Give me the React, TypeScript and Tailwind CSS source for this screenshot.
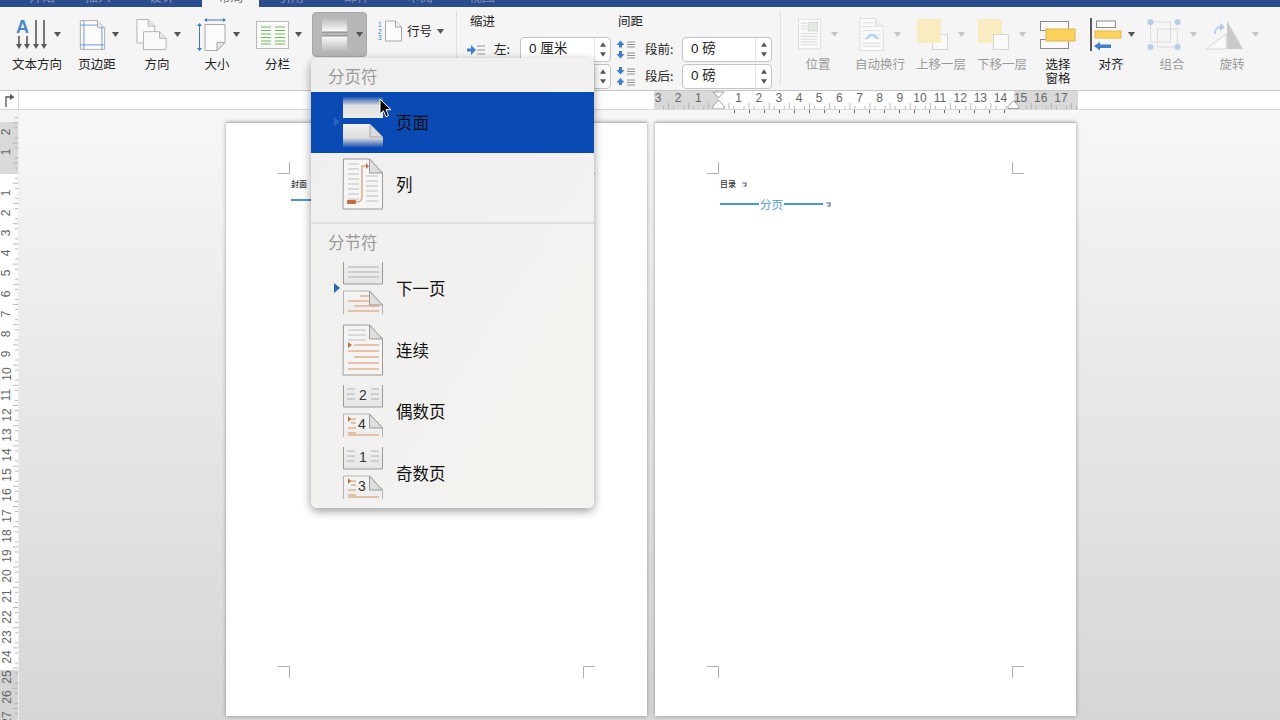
import React from "react";

const FONT = "font-['Noto_Sans_CJK_SC','Noto_Sans',sans-serif]";

function Caret({ cls = "fill-[#555]" }: { cls?: string }) {
  return (
    <svg width="7" height="5" viewBox="0 0 7 5" className={cls}>
      <path d="M0 0h7L3.500 5z" />
    </svg>
  );
}

function TextDirIcon() {
  return (
    <svg width="32" height="32" viewBox="0 0 32 32">
      <text x="0" y="14" fontSize="18" fontWeight="700" fill="#4a86d4" fontFamily="Liberation Sans, sans-serif">A</text>
      <g stroke="#5a5a5a" strokeWidth="1.6" fill="#5a5a5a">
        <path d="M3 17v10M11 17v10M20 1v26M28 1v26" fill="none" />
        <path d="M0 25l3 5 3-5zM8 25l3 5 3-5zM17 25l3 5 3-5zM25 25l3 5 3-5z" stroke="none" />
      </g>
    </svg>
  );
}

function MarginIcon() {
  return (
    <svg width="27" height="34" viewBox="0 0 30 35">
      <path d="M1.500 1.500h19l8 8v24h-27z" fill="#fbfbfb" stroke="#a8a8a8" />
      <path d="M20.500 1.500v8h8" fill="#e6e6e6" stroke="#a8a8a8" />
      <path d="M5.500 1.500v32M25.500 8v25.500M1.500 6.500h19M1.500 28.500h27" stroke="#5b93d3" fill="none" />
    </svg>
  );
}

function OrientIcon() {
  return (
    <svg width="32" height="33" viewBox="0 0 34 34">
      <path d="M1 1h12l7 7v18H1z" fill="#fafafa" stroke="#b0b0b0" />
      <path d="M13 1v7h7" fill="#e8e8e8" stroke="#b0b0b0" />
      <path d="M8 14h17l7 7v12H8z" fill="#fafafa" stroke="#b0b0b0" />
      <path d="M25 14v7h7" fill="#e8e8e8" stroke="#b0b0b0" />
    </svg>
  );
}

function SizeIcon() {
  return (
    <svg width="30" height="33" viewBox="0 0 30 33">
      <path d="M8 6.500h20v18l-8 8H8z" fill="#fbfbfb" stroke="#a8a8a8" />
      <path d="M28 24.500h-8v8z" fill="#e6e6e6" stroke="#a8a8a8" />
      <path d="M8 2h20M2.500 7v24" stroke="#3f78bc" fill="none" />
      <path d="M7 2l3-2v4zM29 2l-3-2v4zM2.500 5l-2.500 3h5zM2.500 33l-2.500-3h5z" fill="#3f78bc" />
    </svg>
  );
}

function ColumnsIcon() {
  return (
    <svg width="33" height="28" viewBox="0 0 33 28">
      <rect x=".5" y=".5" width="32" height="27" fill="#fbfbfb" stroke="#b9b9b9" />
      <path d="M5 6h10M5 9.500h10M5 13h10M5 16.500h10M5 20h10M5 23h10M19 6h10M19 9.500h10M19 13h10M19 16.500h10M19 20h10M19 23h10" stroke="#6cba55" strokeWidth="1.200" />
    </svg>
  );
}

function BreakIcon() {
  return (
    <svg width="26" height="33" viewBox="0 0 26 33">
      <defs>
        <linearGradient id="bt" x1="0" y1="0" x2="0" y2="1">
          <stop offset="0" stopColor="#b9b9b9" />
          <stop offset="1" stopColor="#fdfdfd" />
        </linearGradient>
        <linearGradient id="bb" x1="0" y1="0" x2="0" y2="1">
          <stop offset="0" stopColor="#fdfdfd" />
          <stop offset="1" stopColor="#b9b9b9" />
        </linearGradient>
      </defs>
      <rect x="0" y="0" width="25" height="14" fill="url(#bt)" />
      <rect x="0" y="18" width="25" height="15" fill="url(#bb)" />
      <path d="M0 14h25M0 18h25" stroke="#707070" strokeWidth=".8" />
    </svg>
  );
}

function LineNoIcon() {
  return (
    <svg width="24" height="22" viewBox="0 0 24 22">
      <text x="0" y="7" fontSize="6.500" fill="#3a78bf" fontFamily="Liberation Sans, sans-serif">1</text>
      <text x="0" y="13.500" fontSize="6.500" fill="#3a78bf" fontFamily="Liberation Sans, sans-serif">2</text>
      <text x="0" y="20" fontSize="6.500" fill="#3a78bf" fontFamily="Liberation Sans, sans-serif">3</text>
      <path d="M7.500 1h10l6 6v14h-16z" fill="#fcfcfc" stroke="#a8a8a8" />
      <path d="M17.500 1v6h6" fill="#ededed" stroke="#a8a8a8" />
    </svg>
  );
}

function PositionIcon() {
  return (
    <svg width="24" height="33" viewBox="0 0 26 34">
      <rect x=".5" y=".5" width="24" height="32" fill="#fbfbfb" stroke="#dcdcdc" />
      <rect x="11" y="4" width="10" height="9" fill="#e5ebe0" stroke="#cfcfcf" />
      <path d="M3 5h6M3 8h6M3 11h6M3 16h18M3 19h18M3 22h18M3 25h18M3 28h18" stroke="#d6d6d6" />
    </svg>
  );
}

function WrapIcon() {
  return (
    <svg width="26" height="33" viewBox="0 0 26 34">
      <path d="M.5.500h16l8 8v25h-24z" fill="#fbfbfb" stroke="#dcdcdc" />
      <path d="M16.500.500v8h8" fill="#eeeeee" stroke="#dcdcdc" />
      <path d="M3 5h11M3 9h11M3 13h19M3 17h3M19 17h3M3 21h3M19 21h3M3 26h19M3 29h19" stroke="#dcdcdc" />
      <path d="M6 22c2-8 12-8 14 0l-3 0c-2-4-6-4-8 0z" fill="#bcd4ee" />
    </svg>
  );
}

function LayerIcon({ back }: { back?: boolean }) {
  return (
    <svg width="32" height="31" viewBox="0 0 32 31">
      {back ? (
        <>
          <rect x="0" y="0" width="24" height="24" fill="#f8ecc0" />
          <rect x="15.500" y="15.500" width="15" height="15" fill="#fafafa" stroke="#d6d6d6" />
        </>
      ) : (
        <>
          <rect x="15.500" y="15.500" width="15" height="15" fill="#fafafa" stroke="#d6d6d6" />
          <rect x="0" y="0" width="24" height="24" fill="#f8ecc0" />
        </>
      )}
    </svg>
  );
}

function PaneIcon() {
  return (
    <svg width="36" height="28" viewBox="0 0 36 28">
      <rect x=".5" y=".5" width="28" height="9" fill="#fbfbfb" stroke="#8c8c8c" />
      <rect x=".5" y="18.500" width="28" height="9" fill="#fbfbfb" stroke="#8c8c8c" />
      <rect x="6" y="8" width="29" height="12" fill="#fbd25c" stroke="#dcb445" />
    </svg>
  );
}

function AlignIcon() {
  return (
    <svg width="32" height="33" viewBox="0 0 32 33">
      <rect x="0" y="0" width="2" height="33" fill="#5a5a5a" />
      <rect x="6.500" y="3" width="19" height="6.500" fill="#fbfbfb" stroke="#8c8c8c" />
      <rect x="5" y="13" width="26" height="7" fill="#fbd25c" stroke="#e3bb4a" />
      <path d="M4 28l6-4v2.500h11v3.500H10v2.500z" fill="#3f7fcf" />
    </svg>
  );
}

function GroupIcon() {
  return (
    <svg width="34" height="33" viewBox="0 0 34 33">
      <rect x="3.500" y="4" width="20" height="20" fill="none" stroke="#dcdcdc" />
      <rect x="10.500" y="11" width="20" height="18" fill="none" stroke="#dcdcdc" />
      <circle cx="3.500" cy="4" r="3" fill="#b4cce8" />
      <circle cx="30.500" cy="4" r="3" fill="#b4cce8" />
      <circle cx="3.500" cy="29" r="3" fill="#b4cce8" />
      <circle cx="30.500" cy="29" r="3" fill="#b4cce8" />
    </svg>
  );
}

function RotateIcon() {
  return (
    <svg width="38" height="30" viewBox="0 0 38 30">
      <path d="M22 1l16 28H22z" fill="#c9c9c9" />
      <path d="M1 29l20-15v15z" fill="#fafafa" stroke="#d6d6d6" />
      <path d="M10 14c0-5 2-7 6-7" fill="none" stroke="#b4cce8" strokeWidth="1.600" />
      <path d="M15 3l5 4-5 4z" fill="#b4cce8" />
    </svg>
  );
}

function Tool({ icon, label, w = "w-[60px]", caret = true, dim = false, wide = false }: {
  icon: React.ReactNode; label: string; w?: string; caret?: boolean; dim?: boolean; wide?: boolean;
}) {
  return (
    <div className={`${w} h-[83px] shrink-0 flex flex-col items-center pt-[10px]`}>
      <div className={`h-[35px] flex items-center ${wide ? "gap-[9px]" : "gap-[6px] pl-[3px]"}`}>
        {icon}
        {caret && <Caret cls={dim ? "fill-[#c4c4c4]" : "fill-[#555]"} />}
      </div>
      <div className={`mt-[5px] text-[12.5px] leading-[14px] text-center whitespace-pre-line ${dim ? "text-[#9b9b9b]" : "text-[#222]"}`}>
        {label}
      </div>
    </div>
  );
}

function Spin() {
  return (
    <div className="w-[16px] h-full border-l border-[#e6e6e6] flex flex-col items-center justify-center gap-[5px]">
      <svg width="6" height="5" viewBox="0 0 7 5" className="fill-[#555]"><path d="M3.500 0L7 5H0z" /></svg>
      <svg width="6" height="5" viewBox="0 0 7 5" className="fill-[#555]"><path d="M0 0h7L3.500 5z" /></svg>
    </div>
  );
}

function Field({ value, w }: { value: string; w: string }) {
  return (
    <div className={`${w} h-[25px] bg-white border border-[#c4c4c4] rounded-[4px] flex items-center justify-between pl-[8px] text-[13.5px] text-[#222] shrink-0 font-['Liberation_Sans','Noto_Sans_CJK_SC',sans-serif]`}>
      <span>{value}</span>
      <Spin />
    </div>
  );
}

function SpaceIcon({ up }: { up?: boolean }) {
  return (
    <svg width="21" height="21" viewBox="0 0 21 21">
      <g fill="#3f7fcf">
        {up ? (
          <>
            <path d="M4 1h3v3h2.500L5.500 8.500 1.500 4H4z" />
            <path d="M5.500 12l4 4.500H7V19H4v-2.500H1.500z" />
          </>
        ) : (
          <>
            <path d="M5.500 1.500l4 4.500H7v2.500H4V6H1.500z" />
            <path d="M4 12h3v3h2.500L5.500 19.500 1.500 15H4z" />
          </>
        )}
      </g>
      <path d="M12 3h8M12 5.500h8M12 8h8M12 14h8M12 16.500h8M12 19h8" stroke="#888" strokeWidth=".9" />
    </svg>
  );
}

function HRuler() {
  const nums = ["3", "2", "1", "", "1", "2", "3", "4", "5", "6", "7", "8", "9", "10", "11", "12", "13", "14", "15", "16", "17"];
  return (
    <div className="relative w-[424px] h-full shrink-0 bg-white overflow-hidden">
      <div className="flex h-full">
        <div className="w-[64px] bg-[#d9d9d9]" />
        <div className="w-[296px]" />
        <div className="flex-1 bg-[#d9d9d9]" />
      </div>
      <svg className="absolute inset-0" width="424" height="18" viewBox="0 0 424 18">
        {Array.from({ length: 85 }).map((_, i) => {
          const x = 0.5 + 3.900 + i * 5.0375;
          const h = i % 4 === 2 ? 6 : i % 4 === 0 ? 0 : 3;
          return h ? <path key={i} d={`M${x} 18v-${h}`} stroke="#a8a8a8" strokeWidth=".8" /> : null;
        })}
      </svg>
      <div className="absolute left-[-6px] top-[-1px] flex">
        {nums.map((n, i) => (
          <span key={i} className="w-[20.15px] text-center text-[12px] leading-[16px] text-[#666] font-['Liberation_Sans',sans-serif]">{n}</span>
        ))}
      </div>
      <svg className="absolute left-[58px] top-0" width="13" height="18" viewBox="0 0 13 18">
        <path d="M1 1l11 0-5.500 6zM1 18h11v-3l-5.500-6-5.500 6z" fill="#fff" stroke="#8a8a8a" strokeWidth=".8" />
      </svg>
      <svg className="absolute left-[353px] top-[9px]" width="13" height="9" viewBox="0 0 13 9">
        <path d="M1 8.500h11v-2l-5.500-6-5.500 6z" fill="#fff" stroke="#8a8a8a" strokeWidth=".8" />
      </svg>
    </div>
  );
}

function VRuler() {
  const nums = ["2", "1", "", ...Array.from({ length: 27 }, (_, i) => String(i + 1))];
  return (
    <div className="relative w-[18px] h-full shrink-0 overflow-hidden">
      <div className="flex flex-col h-full">
        <div className="h-[12px] bg-[#f4f4f4]" />
        <div className="h-[52px] bg-[#d9d9d9]" />
        <div className="h-[496px] bg-white" />
        <div className="flex-1 bg-[#d4d4d4]" />
      </div>
      <svg className="absolute inset-0" width="18" height="610" viewBox="0 0 18 610">
        {Array.from({ length: 125 }).map((_, i) => {
          const y = 2.600 + i * 5.050;
          const h = i % 4 === 0 ? 0 : i % 4 === 2 ? 5 : 3;
          return h ? <path key={i} d={`M18 ${y}h-${h}`} stroke="#a8a8a8" strokeWidth=".8" /> : null;
        })}
      </svg>
      <div className="absolute left-0 top-[12px] flex flex-col">
        {nums.map((n, i) => (
          <div key={i} className="h-[20.2px] w-[13px] flex items-center justify-center">
            <span className="-rotate-90 text-[12px] leading-[12px] text-[#666] font-['Liberation_Sans',sans-serif]">{n}</span>
          </div>
        ))}
      </div>
    </div>
  );
}

function Crop({ kind }: { kind: "tl" | "tr" | "bl" | "br" }) {
  const d = {
    tl: "M0 11.500h11.500V0",
    tr: "M.5 0v11.500H12",
    bl: "M0 .5h11.500V12",
    br: "M12 .5H.5V12",
  }[kind];
  return (
    <svg width="12" height="12" viewBox="0 0 12 12" className="shrink-0">
      <path d={d} fill="none" stroke="#b0b0b0" />
    </svg>
  );
}

function ParaMark() {
  return (
    <svg width="5" height="5" viewBox="0 0 5 5" className="shrink-0">
      <path d="M.5 1H4v3H1.500" fill="none" stroke="#2d5fb0" strokeWidth="1.100" />
    </svg>
  );
}

function Page({ children }: { children: React.ReactNode }) {
  return (
    <div className="w-[421px] h-[594px] shrink-0 bg-white border-t border-[#bcbcbc] shadow-[0_0_4px_rgba(0,0,0,0.35)] flex flex-col px-[52px] pt-[39px] pb-[38px] relative">
      <div className="flex justify-between">
        <Crop kind="tl" />
        <Crop kind="tr" />
      </div>
      <div className="flex-1 pl-[13px] flex flex-col">{children}</div>
      <div className="flex justify-between">
        <Crop kind="bl" />
        <Crop kind="br" />
      </div>
    </div>
  );
}

function Lines({ d, c = "#bdbdbd" }: { d: string; c?: string }) {
  return <path d={d} stroke={c} fill="none" strokeWidth="1" />;
}

function Defs() {
  return (
    <svg width="0" height="0" className="absolute">
      <defs>
        <linearGradient id="pgTop" x1="0" y1="0" x2="0" y2="1">
          <stop offset="0" stopColor="#2356b4" />
          <stop offset=".4" stopColor="#dedede" />
          <stop offset="1" stopColor="#ececec" />
        </linearGradient>
        <linearGradient id="pgBot" x1="0" y1="0" x2="0" y2="1">
          <stop offset="0" stopColor="#f1f1f1" />
          <stop offset=".6" stopColor="#dedede" />
          <stop offset="1" stopColor="#2356b4" />
        </linearGradient>
        <linearGradient id="fadeTop" x1="0" y1="0" x2="0" y2="1">
          <stop offset="0" stopColor="#f0f0f0" />
          <stop offset="1" stopColor="#e6e6e6" />
        </linearGradient>
        <linearGradient id="fadeBot" x1="0" y1="0" x2="0" y2="1">
          <stop offset="0" stopColor="#f5f5f5" />
          <stop offset=".8" stopColor="#eeeeee" />
          <stop offset="1" stopColor="#f1f1f1" />
        </linearGradient>
      </defs>
    </svg>
  );
}

function IconPage() {
  return (
    <svg width="42" height="52" viewBox="0 0 42 52">
      <rect x="1" y="1" width="40" height="21" fill="url(#pgTop)" />
      <path d="M1 28h27l13 14v9H1z" fill="url(#pgBot)" />
      <path d="M28 28v13h13z" fill="#dcdcdc" stroke="#9a9a9a" strokeWidth=".8" />
    </svg>
  );
}

function IconCol() {
  return (
    <svg width="42" height="52" viewBox="0 0 42 52">
      <path d="M1.500 1h26l13 14v36h-39.500z" fill="#f6f6f6" stroke="#9a9a9a" />
      <path d="M27.500 1v14h13z" fill="#dedede" stroke="#9a9a9a" />
      <Lines d="M6 6h11M6 11h11M6 16h11M6 21h11M6 26h11M6 31h11M6 36h11M24 18h12M24 23h12M24 28h12M24 33h12M24 38h12M24 43h12M6 41h11" />
      <path d="M7 44h8c4 0 5-2 5-6V8h4" fill="none" stroke="#e3a884" strokeWidth="1.500" />
      <path d="M24 5l3 3-3 3z" fill="#c66d3d" />
      <rect x="5" y="42" width="9" height="4" rx="1" fill="#c66d3d" />
    </svg>
  );
}

function IconNext() {
  return (
    <svg width="42" height="52" viewBox="0 0 42 52">
      <path d="M1.500 0v22h39V0" fill="url(#fadeTop)" stroke="#9a9a9a" />
      <Lines d="M6 5h31M6 10h31M6 15h31" c="#b0b0b0" />
      <path d="M1.500 52V29h26l13 14v9" fill="url(#fadeBot)" stroke="#b4b4b4" />
      <path d="M27.500 29v14h13z" fill="#dedede" stroke="#9a9a9a" />
      <Lines d="M18 34h9M6 39h22M12 44h25M6 49h31" c="#d9905f" />
    </svg>
  );
}

function IconCont() {
  return (
    <svg width="42" height="52" viewBox="0 0 42 52">
      <path d="M1.500 1h26l13 14v36h-39.500z" fill="#f4f4f4" stroke="#9a9a9a" />
      <path d="M27.500 1v14h13z" fill="#dedede" stroke="#9a9a9a" />
      <Lines d="M6 6h18M6 11h18" />
      <Lines d="M6 16h18" c="#bdbdbd" />
      <Lines d="M12 21h25M6 27h31M12 33h25M6 39h31M6 45h31" c="#d9905f" />
      <path d="M6 18l4 3-4 3z" fill="#c66d3d" />
    </svg>
  );
}

function IconNum({ a, b }: { a: string; b: string }) {
  return (
    <svg width="42" height="52" viewBox="0 0 42 52">
      <path d="M1.500 0v22h39V0" fill="url(#fadeTop)" stroke="#9a9a9a" />
      <Lines d="M5 4h8M5 9h8M5 14h8M29 4h8M29 9h8M29 14h8" c="#b0b0b0" />
      <text x="21" y="15" textAnchor="middle" fontSize="14" fill="#333" fontFamily="Liberation Sans, sans-serif">{a}</text>
      <path d="M1.500 52V29h26l13 14v9" fill="url(#fadeBot)" stroke="#b4b4b4" />
      <path d="M27.500 29v14h13z" fill="#dedede" stroke="#9a9a9a" />
      <Lines d="M6 34h8M9 38h5M6 43h8M6 48h8M6 50h31" c="#d9905f" />
      <path d="M6 31l3 3-3 3z" fill="#c66d3d" />
      <text x="20" y="44" textAnchor="middle" fontSize="14" fill="#333" fontFamily="Liberation Sans, sans-serif">{b}</text>
    </svg>
  );
}

function MenuRow({ icon, label, mark, active }: { icon: React.ReactNode; label: string; mark?: boolean; active?: boolean }) {
  return (
    <div className={`h-[61.5px] shrink-0 flex items-center pl-[22.500px] ${active ? "bg-[#0a4ab4]" : ""}`}>
      <div className="w-[8px] flex">
        {mark && (
          <svg width="6" height="10" viewBox="0 0 6 10" className={active ? "fill-[#2a62bb]" : "fill-[#2f66b3]"}>
            <path d="M0 0l6 5-6 5z" />
          </svg>
        )}
      </div>
      {icon}
      <span className="ml-[12.500px] text-[16.5px] leading-[20px] text-[#111]">{label}</span>
    </div>
  );
}

function Menu() {
  return (
    <div className="absolute left-[311px] top-[58px] w-[283px] h-[450px] rounded-[6px] bg-gradient-to-br from-[#efefef] to-[#f4f3ef] shadow-[0_3px_10px_rgba(0,0,0,0.4)] flex flex-col overflow-hidden">
      <Defs />
      <div className="h-[33.5px] shrink-0 pl-[17px] pt-[8px] text-[16.5px] leading-[20px] text-[#9a9a9a]">分页符</div>
      <MenuRow icon={<IconPage />} label="页面" mark active />
      <MenuRow icon={<IconCol />} label="列" />
      <div className="h-[7px] shrink-0" />
      <div className="h-[2px] shrink-0 bg-[#dfdfdf]" />
      <div className="h-[34px] shrink-0 pl-[17px] pt-[8px] text-[16.5px] leading-[20px] text-[#9a9a9a]">分节符</div>
      <MenuRow icon={<IconNext />} label="下一页" mark />
      <MenuRow icon={<IconCont />} label="连续" />
      <MenuRow icon={<IconNum a="2" b="4" />} label="偶数页" />
      <MenuRow icon={<IconNum a="1" b="3" />} label="奇数页" />
    </div>
  );
}

function Tabs() {
  const tabs: [string, string][] = [
    ["开始", "w-[64px]"], ["插入", "w-[48px]"], ["设计", "w-[80px]"], ["布局", "w-[57px]"],
    ["引用", "w-[64px]"], ["邮件", "w-[68px]"], ["审阅", "w-[58px]"], ["视图", "w-[66px]"],
  ];
  return (
    <div className="h-[7px] shrink-0 bg-[#2b4c8d] flex pl-[10px] overflow-hidden">
      {tabs.map(([t, w]) => (
        <div key={t} className={`${w} h-[7px] flex justify-center overflow-hidden ${t === "布局" ? "bg-[#f5f5f5] text-[#777]" : "text-[#7f94bd]"}`}>
          <span className="text-[13px] leading-[13px] mt-[-11.500px]">{t}</span>
        </div>
      ))}
    </div>
  );
}

export default function App() {
  return (
    <div className={`relative w-[1280px] h-[720px] overflow-hidden flex flex-col bg-[#f5f5f5] ${FONT}`}>
      <Tabs />
      {/* ribbon */}
      <div className="h-[84px] shrink-0 flex bg-[#f5f5f5] border-b border-[#c6c6c6] pl-[7px]">
        <Tool icon={<TextDirIcon />} label="文本方向" />
        <Tool icon={<MarginIcon />} label="页边距" />
        <Tool icon={<OrientIcon />} label="方向" />
        <Tool icon={<SizeIcon />} label="大小" />
        <Tool icon={<ColumnsIcon />} label="分栏" w="w-[61px]" />
        <div className="ml-[4px] mt-[5px] w-[55px] h-[45px] shrink-0 bg-[#b7b7b7] border border-[#a6a6a6] rounded-[4px] flex items-center pl-[9px] gap-[8px]">
          <BreakIcon />
          <Caret />
        </div>
        <div className="ml-[11px] mt-[12px] h-[24px] flex items-center shrink-0">
          <LineNoIcon />
          <span className="ml-[5px] text-[12.5px] text-[#222]">行号</span>
          <span className="ml-[5px]"><Caret /></span>
        </div>
        <div className="ml-[12px] w-px h-[74px] mt-[4px] bg-[#e0e0e0] shrink-0" />
        {/* paragraph */}
        <div className="w-[323px] shrink-0 pl-[10px] pt-[6px] flex flex-col text-[12.5px] text-[#222]">
          <div className="flex h-[16px] leading-[16px]">
            <span className="ml-[3px] w-[148px]">缩进</span>
            <span>间距</span>
          </div>
          <div className="mt-[8px] flex items-center h-[25px]">
            <svg width="18" height="12" viewBox="0 0 18 12" className="shrink-0">
              <path d="M0 4.500h4V1l5 5-5 5V7.500H0z" fill="#3f7fcf" />
              <path d="M10 2h8M10 6h8M10 10h8" stroke="#888" strokeWidth=".9" />
            </svg>
            <span className="ml-[9px] w-[26px]">左:</span>
            <Field value="0 厘米" w="w-[91px]" />
            <span className="ml-[4px]"><SpaceIcon /></span>
            <span className="ml-[9px] w-[37px]">段前:</span>
            <Field value="0 磅" w="w-[90px]" />
          </div>
          <div className="mt-[2px] flex items-center h-[25px]">
            <svg width="18" height="12" viewBox="0 0 18 12" className="shrink-0" />
            <span className="ml-[9px] w-[26px]">右:</span>
            <Field value="0 厘米" w="w-[91px]" />
            <span className="ml-[4px]"><SpaceIcon up /></span>
            <span className="ml-[9px] w-[37px]">段后:</span>
            <Field value="0 磅" w="w-[90px]" />
          </div>
        </div>
        <div className="w-px h-[74px] mt-[4px] bg-[#e0e0e0] shrink-0" />
        {/* arrange */}
        <div className="w-[3px] shrink-0" />
        <Tool icon={<PositionIcon />} label="位置" dim wide w="w-[68px]" />
        <Tool icon={<WrapIcon />} label="自动换行" dim wide w="w-[56px]" />
        <Tool icon={<LayerIcon />} label="上移一层" dim wide w="w-[66px]" />
        <Tool icon={<LayerIcon back />} label="下移一层" dim wide w="w-[56px]" />
        <Tool icon={<PaneIcon />} label={"选择\n窗格"} caret={false} wide w="w-[56px]" />
        <Tool icon={<AlignIcon />} label="对齐" w="w-[50px]" />
        <Tool icon={<GroupIcon />} label="组合" dim wide w="w-[72px]" />
        <Tool icon={<RotateIcon />} label="旋转" dim wide w="w-[48px]" />
      </div>
      {/* horizontal ruler row */}
      <div className="h-[19px] shrink-0 flex bg-white border-b border-[#d8d8d8]">
        <div className="w-[19px] shrink-0 border-r border-[#d8d8d8] flex items-center justify-center">
          <svg width="11" height="13" viewBox="0 0 11 13">
            <path d="M2 13V3h5" fill="none" stroke="#555" strokeWidth="1.300" />
            <path d="M6 0l4.500 3L6 6z" fill="#555" />
          </svg>
        </div>
        <div className="w-[635px] shrink-0" />
        <HRuler />
      </div>
      {/* body */}
      <div className="flex-1 min-h-0 flex">
        <VRuler />
        <div className="flex-1 bg-gradient-to-b from-[#f7f7f7] to-[#d6d6d6] border-l border-[#ececec] pt-[12px] pl-[207px] flex gap-[8px] overflow-hidden relative">
          <Page>
            <div className="mt-[4px] text-[8px] leading-[12px] text-[#333] font-medium">封面</div>
            <div className="mt-[9px] flex items-center"><div className="w-[22px] h-[1.5px] bg-[#4a97d4]" /></div>
          </Page>
          <Page>
            <div className="mt-[4px] flex items-center gap-[6px] text-[8px] leading-[12px] text-[#333] font-medium">
              目录
              <ParaMark />
            </div>
            <div className="mt-[7px] flex items-center">
              <div className="w-[39px] h-[1.5px] bg-[#4a97d4]" />
              <span className="mx-[1px] text-[11.5px] leading-[14px] text-[#4a97d4]">分页</span>
              <div className="w-[39px] h-[1.5px] bg-[#4a97d4]" />
              <span className="ml-[3px]"><ParaMark /></span>
            </div>
          </Page>
        </div>
      </div>
      {/* tab stops under ruler */}
      <div className="absolute left-[734px] top-[110px] flex gap-[14px]">
        {Array.from({ length: 19 }).map((_, i) => (
          <div key={i} className="w-px h-[3px] bg-[#666]" />
        ))}
      </div>
      <Menu />
      {/* mouse pointer */}
      <svg className="absolute left-[379px] top-[98px]" width="14" height="21" viewBox="0 0 14 21">
        <path d="M1 1v15l3.500-3.300 2.500 6 2.500-1-2.500-6H12z" fill="#000" stroke="#fff" strokeWidth="1" />
      </svg>
    </div>
  );
}
